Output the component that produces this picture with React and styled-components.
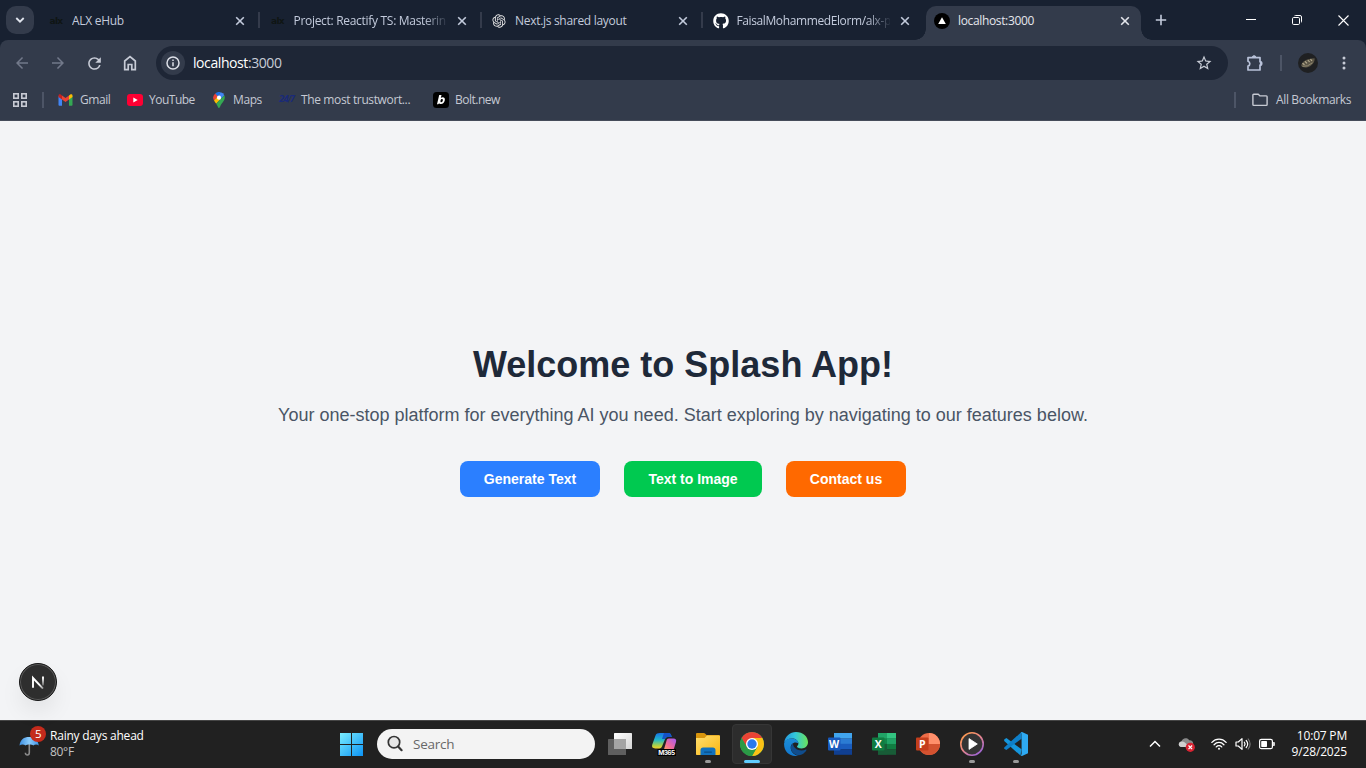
import React from "react";
import styled, { createGlobalStyle, css } from "styled-components";
import { FaGithub } from "react-icons/fa";
import { RiOpenaiFill } from "react-icons/ri";
import { MdArrowBack, MdArrowForward, MdRefresh, MdStarOutline } from "react-icons/md";

const STRIP = "#182131";
const BAR = "#333b4b";

const Global = createGlobalStyle`
  *, *::before, *::after { box-sizing: border-box; }
  html, body, #root { height: 100%; }
  body { margin: 0; overflow: hidden; font-family: "Open Sans", "Noto Sans", sans-serif; }
  svg { display: block; flex: none; }
`;

const Screen = styled.div`
  display: flex;
  flex-direction: column;
  width: 100%;
  height: 768px;
  background: ${STRIP};
`;

const Label = styled.span`
  white-space: nowrap;
  font-size: ${(p) => p.$size || 12}px;
  letter-spacing: ${(p) => p.$track || 0}px;
  line-height: 16px;
`;

/* ---------- tab strip ---------- */

const TabStrip = styled.div`
  display: flex;
  align-items: center;
  flex: none;
  height: 40px;
  padding-left: 6px;
  background: ${STRIP};
`;

const TabSearch = styled.div`
  display: grid;
  place-items: center;
  width: 28px;
  height: 28px;
  margin-right: 6px;
  border-radius: 10px;
  background: ${BAR};
`;

const flare = css`
  content: "";
  position: absolute;
  bottom: 0;
  width: 11px;
  height: 11px;
`;

const Tab = styled.div`
  position: relative;
  display: flex;
  align-items: center;
  flex: none;
  align-self: flex-end;
  width: 216px;
  height: 34px;
  margin-right: 5.5px;
  padding: 0 11px 5px 8px;
  color: #c3cbdc;
  ${(p) =>
    p.$active &&
    css`
      width: 215px;
      margin-right: 6px;
      color: #e4e6ec;
      background: ${BAR};
      border-radius: 10px 10px 0 0;
      &::before {
        ${flare}
        left: -11px;
        background: radial-gradient(circle at 0 0, transparent 10.5px, ${BAR} 11px);
      }
      &::after {
        ${flare}
        right: -11px;
        background: radial-gradient(circle at 100% 0, transparent 10.5px, ${BAR} 11px);
      }
    `}
`;

const TabIcon = styled.span`
  display: grid;
  place-items: center;
  width: 16px;
  height: 16px;
  margin-right: 8px;
`;

const TabTitle = styled(Label)`
  width: 153px;
  margin-right: auto;
  overflow: hidden;
  ${(p) => p.$fade && css`mask-image: linear-gradient(90deg, #000 130px, transparent 155px);`}
`;

const TabDivider = styled.span`
  position: absolute;
  top: 6px;
  right: -4px;
  width: 2px;
  height: 16px;
  background: #343b4b;
`;

const AlxMark = styled.span`
  font: 700 9px/12px "DejaVu Sans", sans-serif;
  letter-spacing: -0.7px;
  color: #0f1514;
`;

const WindowButtons = styled.div`
  display: flex;
  margin-left: auto;
`;

const WindowButton = styled.div`
  display: grid;
  place-items: center;
  width: 46px;
  height: 40px;
`;

const NewTab = styled.div`
  display: grid;
  place-items: center;
  width: 28px;
  height: 28px;
`;

/* ---------- toolbar ---------- */

const Toolbar = styled.div`
  display: flex;
  align-items: center;
  flex: none;
  height: 46px;
  padding: 0 13px 0 4px;
  background: ${BAR};
  border-radius: 8px 8px 0 0;
`;

const ToolButton = styled.div`
  display: grid;
  place-items: center;
  flex: none;
  width: ${(p) => p.$w || 36}px;
  height: 34px;
  color: ${(p) => (p.$dim ? "#72798a" : "#c7cbd6")};
`;

const Omnibox = styled.div`
  display: flex;
  align-items: center;
  flex: none;
  width: 1072px;
  height: 34px;
  margin: 0 8px;
  padding: 0 15px 0 5px;
  border-radius: 17px;
  background: #1e2636;
  color: #c8ccd6;
`;

const InfoBadge = styled.div`
  display: grid;
  place-items: center;
  width: 24px;
  height: 24px;
  margin-right: 8px;
  border-radius: 50%;
  background: ${BAR};
`;

const Url = styled(Label)`
  margin-right: auto;
  line-height: 20px;
  b { font-weight: 400; color: #fff; }
`;

const VRule = styled.span`
  flex: none;
  width: 2px;
  height: ${(p) => p.$h || 16}px;
  background: #4d5566;
`;

/* ---------- bookmarks ---------- */

const Bookmarks = styled.div`
  display: flex;
  align-items: center;
  flex: none;
  height: 35px;
  padding: 0 15px 7px 12px;
  background: ${BAR};
  border-bottom: 1px solid #454c5a;
`;

const Bookmark = styled.div`
  display: flex;
  align-items: center;
  width: ${(p) => p.$w}px;
  gap: ${(p) => p.$gap || 6}px;
  color: #c5c9d3;
`;

const DaySeven = styled.span`
  width: 16px;
  font: italic 700 8px/12px "DejaVu Sans", sans-serif;
  letter-spacing: -1.1px;
  color: #1a2a78;
`;

/* ---------- page ---------- */

const Page = styled.main`
  position: relative;
  display: flex;
  flex-direction: column;
  align-items: center;
  justify-content: center;
  flex: 1;
  min-height: 0;
  background: #f3f4f6;
  font-family: "Liberation Sans", Arial, sans-serif;
`;

const Heading = styled.h1`
  margin: 0 0 16px;
  font-size: 36px;
  line-height: 40px;
  font-weight: 700;
  color: #1e2939;
`;

const Intro = styled.p`
  margin: 0 0 32px;
  font-size: 18px;
  line-height: 28px;
  color: #4a5565;
`;

const Actions = styled.div`
  display: flex;
  gap: 24px;
`;

const Action = styled.button`
  width: ${(p) => p.$w}px;
  height: 36px;
  padding: 0;
  border: 0;
  border-radius: 8px;
  background: ${(p) => p.$bg};
  color: #fff;
  font: 700 14px/20px "Liberation Sans", Arial, sans-serif;
`;

const DevBadge = styled.div`
  position: absolute;
  left: 19px;
  bottom: 19px;
  display: grid;
  place-items: center;
  width: 38px;
  height: 38px;
  border-radius: 50%;
  border: 1px solid #171717;
  background: #2e2e2e;
  box-shadow: inset 0 0 0 1px #5a5a5a, 0 12px 24px -4px rgba(0, 0, 0, 0.1);
`;

/* ---------- taskbar ---------- */

const Taskbar = styled.footer`
  display: grid;
  grid-template-columns: 329px 1fr 226px;
  flex: none;
  height: 48px;
  padding-bottom: 2px;
  background: #212121;
  border-top: 1px solid #464646;
  color: #fff;
`;

const Weather = styled.div`
  display: flex;
  align-items: center;
  padding-left: 18px;
  gap: 4px;
`;

const Lines = styled.div`
  display: flex;
  flex-direction: column;
  align-items: ${(p) => (p.$end ? "flex-end" : "flex-start")};
  padding-top: 1px;
  ${(p) => p.$end && css`margin-left: auto;`}
  span + span { color: ${(p) => (p.$end ? "#fff" : "#c4c4c4")}; }
`;

const Apps = styled.div`
  display: flex;
  align-items: center;
`;

const AppSlot = styled.div`
  position: relative;
  display: grid;
  place-items: center;
  width: 44px;
  height: 45px;
`;

const ActiveFrame = styled.div`
  display: grid;
  place-items: center;
  width: 40px;
  height: 40px;
  border-radius: 4px;
  background: #2d2d2d;
  border: 1px solid #363636;
`;

const Running = styled.span`
  position: absolute;
  left: 50%;
  bottom: 3px;
  width: ${(p) => (p.$on ? 16 : 6)}px;
  height: 3px;
  transform: translateX(-50%);
  border-radius: 2px;
  background: ${(p) => (p.$on ? "#60cdff" : "#9a9a9a")};
`;

const SearchBox = styled.div`
  display: flex;
  align-items: center;
  width: 218px;
  height: 30px;
  margin: 0 3px 0 4px;
  padding-left: 10px;
  gap: 9px;
  border-radius: 15px;
  background: #f3f3f3;
  color: #686868;
`;

const Tray = styled.div`
  display: flex;
  align-items: center;
  padding-right: 19px;
`;

const TrayItem = styled.div`
  display: grid;
  place-items: center;
  width: ${(p) => p.$w}px;
  height: 30px;
`;

/* ---------- icons ---------- */

const Close = ({ c = "#c3cbdc" }) => (
  <svg width="10" height="10" viewBox="0 0 10 10" stroke={c} strokeWidth="1.6">
    <path d="M1.2 1.2l7.6 7.6M8.8 1.2L1.2 8.8" />
  </svg>
);

const HomeIcon = () => (
  <svg width="16" height="16" viewBox="0 0 16 16" fill="none" stroke="currentColor" strokeWidth="1.7">
    <path d="M2.700 6L8 1.700l5.300 4.300v8.700H9.800V9.500H6.200v5.200H2.700z" />
  </svg>
);

const InfoIcon = () => (
  <svg width="14" height="14" viewBox="0 0 14 14" fill="none" stroke="#dde0e8" strokeWidth="1.5">
    <circle cx="7" cy="7" r="6" />
    <path d="M7 6.3v4M7 3.5v1.4" />
  </svg>
);

const Puzzle = () => (
  <svg width="18" height="18" viewBox="0 0 18 18" fill="none" stroke="#b9c2d9" strokeWidth="1.7" strokeLinejoin="round">
    <path d="M2 3.6h12v4.1a1.7 1.7 0 0 1 0 3.4v4.9H2v-3.9a2.5 2.5 0 0 0 0-4.8z" />
    <path d="M6.400 3.2a1.700 1.500 0 0 1 3.400 0zM14.4 7.9a1.5 1.7 0 0 1 0 3.3z" fill="#b9c2d9" strokeWidth="1" />
  </svg>
);

const Avatar = () => (
  <svg width="20" height="20" viewBox="0 0 20 20">
    <circle cx="10" cy="10" r="10" fill="#1f2022" />
    <path d="M3.2 12.8C3.6 8.6 9 5.3 16.6 5.2c.6 3.400-2.600 8.400-8.200 9.200-2.400.200-4.400-.200-5.200-1.600z" fill="#5c5647" />
    <path d="M4.500 10.200l2 1.500M7 8.300l2 2M9.800 7l1.800 2M12.500 6.200l1.500 1.800" stroke="#b9af91" strokeWidth="1.100" />
    <path d="M4.500 13.300l5-.5 5-3" stroke="#979075" strokeWidth=".9" fill="none" />
  </svg>
);

const Apps4 = () => (
  <svg width="16" height="16" viewBox="0 0 16 16" fill="none" stroke="#c7cad3" strokeWidth="1.600">
    {[[1.8, 1.8], [9.8, 1.8], [1.8, 9.8], [9.8, 9.8]].map(([x, y]) => (
      <rect key={x + "-" + y} x={x} y={y} width="4.400" height="4.400" />
    ))}
  </svg>
);

const Gmail = () => (
  <svg width="15" height="12" viewBox="0 0 15 12">
    <path d="M.5 2v9c0 .5.400.8.8.8H4V4.500z" fill="#4285f4" />
    <path d="M14.500 2v9c0 .5-.400.8-.8.8H11V4.500z" fill="#34a853" />
    <path d="M4 1.500v4L7.500 8 11 5.500v-4L7.500 4z" fill="#ea4335" />
    <path d="M11 1.500v4l3.500-2.600V1.700C14.500.3 13 0 12 .7z" fill="#fbbc04" />
    <path d="M4 1.500v4L.5 2.900V1.700C.5.3 2 0 3 .7z" fill="#c5221f" />
  </svg>
);

const YouTube = () => (
  <svg width="16" height="12" viewBox="0 0 16 12">
    <rect width="16" height="12" rx="3" fill="#ff0033" />
    <path d="M6.300 3.500v5L10.700 6z" fill="#fff" />
  </svg>
);

const MapsPin = () => (
  <svg width="12" height="16" viewBox="0 0 12 16">
    <path d="M2.300 1.400A5.800 5.800 0 0 1 7.700.2L4 5.800z" fill="#1a73e8" />
    <path d="M7.700.2a5.800 5.800 0 0 1 3.600 3L6.500 8.500 4.300 5.500z" fill="#4285f4" />
    <path d="M2.300 1.400A5.700 5.700 0 0 0 1 8.500l4-4z" fill="#ea4335" />
    <path d="M1 8.500c.5 1.100 1.300 2 2.200 3.200L8 6.600 4.300 5z" fill="#fbbc04" />
    <path d="M3.200 11.700C4.600 13.500 5 16 6 16c1 0 1.200-2.500 2.800-4.400 1.700-2.200 4-4.700 2.500-8.400z" fill="#34a853" />
    <circle cx="6" cy="5.700" r="2.100" fill="#fff" />
  </svg>
);

const Bolt = () => (
  <svg width="16" height="16" viewBox="0 0 16 16">
    <rect width="16" height="16" rx="3.500" fill="#000" />
    <path d="M6.200 3h2.300l-.7 2.900c.6-.5 1.200-.7 1.900-.7 1.600 0 2.500 1.200 2.100 3.100-.400 2.200-1.900 3.800-3.800 3.800-.900 0-1.500-.300-1.900-.900l-.9 1.100H4zm1.400 5.200c-.4 1.500 0 2 .7 2 .8 0 1.300-.8 1.500-1.700.2-1-.1-1.600-.8-1.600-.6 0-1.200.5-1.400 1.300z" fill="#fff" fillRule="evenodd" />
  </svg>
);

const Folder = () => (
  <svg width="16" height="14" viewBox="0 0 16 14" fill="none" stroke="#c7cad3" strokeWidth="1.400" strokeLinejoin="round">
    <path d="M.9 2.700V11.600c0 .5.300.8.8.8h12.600c.5 0 .8-.3.8-.8V3.700c0-.5-.3-.8-.8-.8H8L6.300 1.300H1.700c-.5 0-.8.400-.8.8z" />
  </svg>
);

const NextN = () => (
  <svg width="14" height="14" viewBox="0 0 14 14" fill="none" strokeWidth="1.900">
    <defs>
      <linearGradient id="nd" x1="2" y1="1" x2="12.500" y2="13.500" gradientUnits="userSpaceOnUse">
        <stop offset=".65" stopColor="#fff" />
        <stop offset="1" stopColor="#fff" stopOpacity=".45" />
      </linearGradient>
      <linearGradient id="nv" x1="0" y1="1" x2="0" y2="11" gradientUnits="userSpaceOnUse">
        <stop offset=".2" stopColor="#fff" />
        <stop offset="1" stopColor="#fff" stopOpacity=".2" />
      </linearGradient>
    </defs>
    <path d="M2 12.800V3L12 13.600" stroke="url(#nd)" />
    <path d="M12 1.500V10.500" stroke="url(#nv)" />
  </svg>
);

const Umbrella = () => (
  <svg width="28" height="36" viewBox="0 0 28 36">
    <defs>
      <linearGradient id="um" x1="0" y1="0" x2="1" y2="0">
        <stop offset="0" stopColor="#3c8ee0" />
        <stop offset=".5" stopColor="#8acbfb" />
        <stop offset="1" stopColor="#3e94e8" />
      </linearGradient>
    </defs>
    <path d="M11.300 15v11.500c0 3.300-3.900 3.300-3.900.3" fill="none" stroke="#8b8b8b" strokeWidth="1.600" />
    <path d="M1.500 19.500C2.200 13.500 6 11 11 11S20 13.500 20.800 19.500c-1.500-1.300-4-1.300-5.500 0-1.500-1.300-6.300-1.300-7.800 0-1.400-1.200-4.300-1.200-6 0z" fill="url(#um)" />
    <circle cx="20" cy="8" r="8" fill="#c42b1c" />
    <text x="20.200" y="12" textAnchor="middle" fontSize="11.500" fill="#fff" fontFamily="Open Sans">5</text>
  </svg>
);

const Start = () => (
  <svg width="24" height="24" viewBox="0 0 24 24">
    <defs>
      <linearGradient id="st" x1="1" y1="0" x2="24" y2="24" gradientUnits="userSpaceOnUse">
        <stop stopColor="#7df0ff" />
        <stop offset="1" stopColor="#0c93f5" />
      </linearGradient>
    </defs>
    <path d="M1 1h11v11H1zM13 1h11v11H13zM1 13h11v11H1zM13 13h11v11H13z" fill="url(#st)" />
  </svg>
);

const SearchIcon = () => (
  <svg width="17" height="17" viewBox="0 0 17 17" fill="none" stroke="#343434" strokeWidth="1.700">
    <circle cx="7" cy="7.200" r="5.700" fill="#e6e6e6" />
    <path d="M11.100 11.500L14.600 15.200" strokeWidth="2.200" strokeLinecap="round" />
  </svg>
);

const TaskView = () => (
  <svg width="26" height="24" viewBox="0 0 26 24">
    <defs>
      <linearGradient id="tv" x1="0" y1="0" x2="1" y2="1">
        <stop stopColor="#fff" />
        <stop offset="1" stopColor="#d4d4d4" />
      </linearGradient>
    </defs>
    <rect x="7" y="1" width="18" height="16" rx=".6" fill="url(#tv)" />
    <rect x="1" y="7" width="18" height="16" rx=".6" fill="#5f5f5f" />
    <rect x="7" y="7" width="12" height="10" fill="#a4a4a4" />
  </svg>
);

const Copilot = () => (
  <svg width="26" height="26" viewBox="0 0 26 26">
    <defs>
      <linearGradient id="ca" x1="0" y1="0" x2="0" y2="1">
        <stop stopColor="#1673e8" />
        <stop offset=".45" stopColor="#22b8c7" />
        <stop offset=".8" stopColor="#a8d14a" />
        <stop offset="1" stopColor="#f3cf27" />
      </linearGradient>
      <linearGradient id="cb" x1="1" y1="0" x2="0" y2="1">
        <stop stopColor="#a45bf2" />
        <stop offset=".6" stopColor="#f06a9a" />
        <stop offset="1" stopColor="#ffa25c" />
      </linearGradient>
    </defs>
    <path d="M9 2h8.500c2 0 2.500 1.400 3.200 4h-4c-1.700 0-2.300 1-2.800 2.500L11.200 15c-.5 1.600-1.300 2.400-3 2.400H4.200C1.500 17.400.6 16 1.200 13.800L4.500 4.500C5.200 2.700 6.500 2 9 2z" fill="url(#ca)" />
    <path d="M13 2h4.500c2 0 2.500 1.400 3.200 4h-4c-1.500 0-2.300.7-2.800 2H11z" fill="#1551c7" />
    <path d="M17.800 7.500h4.700c2.300 0 3.100 1.300 2.500 3.600L22.500 19H12.800l2.700-9.200c.4-1.500 1-2.300 2.300-2.300z" fill="url(#cb)" />
    <rect x="6.500" y="18" width="18.500" height="7" fill="#000" />
    <text x="15.700" y="24" textAnchor="middle" fontSize="6.500" fontWeight="700" fill="#fff" fontFamily="Inter" textLength="17">M365</text>
  </svg>
);

const Explorer = () => (
  <svg width="26" height="24" viewBox="0 0 26 24">
    <defs>
      <linearGradient id="ex" x1="0" y1="0" x2="1" y2="1">
        <stop stopColor="#ffdf70" />
        <stop offset="1" stopColor="#fcb60f" />
      </linearGradient>
    </defs>
    <path d="M1 2.200C1 1.400 1.500 1 2.200 1h6.400c.8 0 1.200.2 1.700.8L11.500 3h12c.9 0 1.500.6 1.500 1.400V7H1z" fill="#d9950c" />
    <path d="M1 6h8.500L12 3.500h12c.6 0 1 .4 1 1V22c0 .6-.4 1-1 1H2c-.6 0-1-.4-1-1z" fill="url(#ex)" />
    <path d="M5.500 23v-5c0-1.600 1-2.500 2.500-2.500h10c1.500 0 2.500.9 2.500 2.500v5z" fill="#1272bd" />
    <rect x="9" y="19.500" width="8" height="1.200" rx=".6" fill="#0b4d85" />
  </svg>
);

const Chrome = () => (
  <svg width="24" height="24" viewBox="0 0 24 24">
    <circle cx="12" cy="12" r="12" fill="#34a853" />
    <path d="M1.610 6A12 12 0 0 1 22.390 6L12 6.300 6.800 15z" fill="#ea4335" />
    <path d="M22.390 6A12 12 0 0 1 12 24L17.200 15 12 6z" fill="#fbc116" />
    <path d="M1.610 6L6.800 15 12 17.500 17.200 15 12 24A12 12 0 0 1 1.610 6z" fill="#2b9a46" />
    <circle cx="12" cy="12" r="6" fill="#fff" />
    <circle cx="12" cy="12" r="4.700" fill="#2a79ed" />
  </svg>
);

const Edge = () => (
  <svg width="24" height="24" viewBox="0 0 24 24">
    <defs>
      <linearGradient id="ea" x1="0" y1=".4" x2="1" y2=".4">
        <stop stopColor="#2697df" />
        <stop offset=".45" stopColor="#31c7dc" />
        <stop offset="1" stopColor="#6be35a" />
      </linearGradient>
      <linearGradient id="eb" x1="0" y1="0" x2="0" y2="1">
        <stop stopColor="#1c8ed8" />
        <stop offset="1" stopColor="#1177cf" />
      </linearGradient>
    </defs>
    <path d="M.2 10.500C1 4.200 6 0 12 0c7 0 12 4.700 12 10.300 0 3.800-2.900 6.100-6.300 6.100-3 0-4.700-1-4.700-1.900 0-.7 1.400-1.200 1.400-3.100C14.400 8.500 11.500 6.400 8 6.400c-3.500 0-6.500 1.800-7.800 4.100z" fill="url(#ea)" />
    <path d="M.1 11.500C.7 8.300 3.600 6.400 7.600 6.400c3.700 0 6.600 2 6.800 4.800-5-2-8.200 1.500-7.600 5.500.6 4 3.900 6.400 7.500 6.900C6.500 25.500-.4 20 .1 11.500z" fill="url(#eb)" />
    <path d="M8.900 11.500c-2.600 2.200-2.600 5.800-.5 8.600 2.300 3 6.300 4 9.400 2.400 2-1 3.800-2.700 4.600-4.300.3-.6-.1-.8-.6-.6-5.700 2.400-12.400-.300-12.900-6.100z" fill="#104d8d" />
  </svg>
);

const OfficeTile = ({ letter, colors, badge }) => (
  <svg width="26" height="24" viewBox="0 0 26 24">
    {colors.map((c, i) => <rect key={c} x="7" y={1 + i * 5.4} width="18" height="5.600" fill={c} />)}
    {letter === "X" && (
      <>
        <rect x="7" y="1" width="9" height="5.400" fill="#21a366" />
        <rect x="7" y="6.400" width="9" height="5.400" fill="#12874a" />
        <rect x="16" y="6.400" width="9" height="5.400" fill="#21a366" />
        <rect x="7" y="11.800" width="9" height="10.800" fill="#185c37" />
      </>
    )}
    {letter === "P" && (
      <>
        <circle cx="14" cy="12" r="11" fill="#ed6c47" />
        <path d="M14 1a11 11 0 0 1 11 11H14z" fill="#ff8f6b" />
        <path d="M3 12h22a11 11 0 0 1-22 0z" fill="#d35230" />
      </>
    )}
    <rect x="1" y="5.500" width="12.500" height="13" rx="1" fill={badge} />
    <text x="7.200" y="15.600" textAnchor="middle" fontSize="10.500" fontWeight="700" fill="#fff" fontFamily="Open Sans">
      {letter}
    </text>
  </svg>
);

const MediaPlayer = () => (
  <svg width="24" height="24" viewBox="0 0 24 24">
    <defs>
      <linearGradient id="mp" x1="0" y1="0" x2=".8" y2="1">
        <stop stopColor="#ff9d3f" />
        <stop offset=".5" stopColor="#e98686" />
        <stop offset="1" stopColor="#9a63d8" />
      </linearGradient>
    </defs>
    <circle cx="12" cy="12" r="11.200" fill="#343434" stroke="url(#mp)" strokeWidth="1.600" />
    <path d="M9 6.600v10.800l8.300-5.400z" fill="#fff" stroke="#fff" strokeWidth=".8" strokeLinejoin="round" />
  </svg>
);

const VSCode = () => (
  <svg width="24" height="24" viewBox="0 0 24 24">
    <path d="M2.400 6L.2 7.400v1.700L16.500 23.600l1-6.300z" fill="#1596dd" />
    <path d="M17.500 0L.2 15.400v1.300L2.400 18 17.500 6.700z" fill="#0e7fc9" />
    <path d="M16.800.5L18 0l6 2.800v18.400L18 24l-1.400-.5 1-1.300V1.800z" fill="#2eaaf3" />
  </svg>
);

const Cloud = () => (
  <svg width="18" height="16" viewBox="0 0 18 16">
    <path d="M3.800 11C1.500 11 .6 9.500.8 8c.2-1.500 1.400-2.300 2.600-2.400C4 3 6.300 1.800 8.500 2.300c1.200.2 2 .9 2.700 1.900 2.500-.2 4 1.400 4 3.300C15.200 9.800 13.700 11 12 11z" fill="#8a8a8a" />
    <path d="M3.800 11C1.500 11 .6 9.500.8 8c.2-1.500 1.400-2.300 2.600-2.400 1.800-.4 3 .5 4.600 1.900l3 3.500z" fill="#d0d0d0" />
    <circle cx="12.300" cy="11.300" r="4.600" fill="#d92332" />
    <path d="M10.500 9.500l3.600 3.600M14.100 9.500l-3.600 3.600" stroke="#fff" strokeWidth="1.200" />
  </svg>
);

const Wifi = () => (
  <svg width="16" height="14" viewBox="0 0 16 14" fill="none" stroke="#fff" strokeWidth="1.300" strokeLinecap="round">
    <path d="M.9 5.400c4-4.300 10.200-4.300 14.200 0M3.100 7.700c2.800-3 7-3 9.800 0M5.300 9.900c1.500-1.700 3.900-1.700 5.400 0" />
    <circle cx="8" cy="11.700" r="1" fill="#fff" stroke="none" />
  </svg>
);

const Sound = () => (
  <svg width="16" height="14" viewBox="0 0 16 14" fill="none" stroke="#fff" strokeWidth="1.200" strokeLinecap="round" strokeLinejoin="round">
    <path d="M1 5h2.300L7 1.600v10.800L3.300 9H1z" />
    <path d="M9.300 5.200c.9 1.100.9 2.500 0 3.600M11.200 3.500c1.700 2 1.700 5 0 7" />
    <path d="M13.200 2c2.300 3 2.300 7 0 10" stroke="#777" />
  </svg>
);

const Battery = () => (
  <svg width="16" height="12" viewBox="0 0 16 12">
    <rect x=".6" y="1.300" width="12.800" height="9.400" rx="1.800" fill="none" stroke="#fff" strokeWidth="1.200" />
    <path d="M14.200 4h.8c.5 0 .8.300.8.700v2.600c0 .4-.3.700-.8.700h-.8z" fill="#fff" />
    <rect x="2.200" y="3" width="5.800" height="6" rx=".7" fill="#fff" />
  </svg>
);

const TABS = [
  { title: "ALX eHub", icon: <AlxMark>alx</AlxMark>, track: -0.3, divider: true },
  { title: "Project: Reactify TS: Masterin", icon: <AlxMark>alx</AlxMark>, fade: true, track: -0.3, divider: true },
  { title: "Next.js shared layout", icon: <RiOpenaiFill size={16} color="#e6e6e6" />, track: -0.3, divider: true },
  { title: "FaisalMohammedElorm/alx-p", icon: <FaGithub size={16} color="#fff" />, fade: true, track: -0.39 },
  {
    title: "localhost:3000",
    active: true,
    track: -0.35,
    icon: (
      <svg width="16" height="16" viewBox="0 0 16 16">
        <circle cx="8" cy="8" r="8" fill="#000" />
        <path d="M8 4.300l3.800 6.600H4.200z" fill="#fff" />
      </svg>
    ),
  },
];

const TASKS = [
  { id: "view", icon: <TaskView /> },
  { id: "copilot", icon: <Copilot /> },
  { id: "files", icon: <Explorer />, running: true },
  { id: "chrome", icon: <Chrome />, running: true, on: true },
  { id: "edge", icon: <Edge /> },
  { id: "word", icon: <OfficeTile letter="W" badge="#185abd" colors={["#41a5ee", "#2b7cd3", "#1a5dbe", "#103f91"]} /> },
  { id: "excel", icon: <OfficeTile letter="X" badge="#107c41" colors={["#33c481", "#21a366", "#107c41", "#185c37"]} /> },
  { id: "ppt", icon: <OfficeTile letter="P" badge="#c43e1c" colors={[]} /> },
  { id: "media", icon: <MediaPlayer />, running: true },
  { id: "code", icon: <VSCode />, running: true },
];

export default function App() {
  return (
    <Screen>
      <Global />
      <TabStrip>
        <TabSearch>
          <svg width="10" height="8" viewBox="0 0 10 8" fill="none" stroke="#e1e5ee" strokeWidth="1.800">
            <path d="M1.300 2L5 5.700 8.700 2" />
          </svg>
        </TabSearch>
        {TABS.map((t) => (
          <Tab key={t.title} $active={t.active}>
            <TabIcon>{t.icon}</TabIcon>
            <TabTitle $track={t.track} $fade={t.fade}>{t.title}</TabTitle>
            <Close c={t.active ? "#e4e6ec" : undefined} />
            {t.divider && <TabDivider />}
          </Tab>
        ))}
        <NewTab>
          <svg width="12" height="12" viewBox="0 0 12 12" stroke="#c3cbdc" strokeWidth="1.600">
            <path d="M6 .8v10.400M.8 6h10.400" />
          </svg>
        </NewTab>
        <WindowButtons>
          <WindowButton>
            <svg width="10" height="10" viewBox="0 0 10 10" stroke="#fff"><path d="M0 4.500h10" /></svg>
          </WindowButton>
          <WindowButton>
            <svg width="10" height="10" viewBox="0 0 10 10" fill="none" stroke="#fff">
              <rect x=".5" y="2.500" width="7" height="7" rx="1.200" />
              <path d="M2.500.8C2.700.5 3 .5 3.500.5H8A1.500 1.500 0 0 1 9.500 2v4.500c0 .5 0 .8-.5 1" />
            </svg>
          </WindowButton>
          <WindowButton>
            <svg width="11" height="11" viewBox="0 0 11 11" stroke="#fff" strokeWidth="1.100">
              <path d="M.5.500l10 10M10.500.500l-10 10" />
            </svg>
          </WindowButton>
        </WindowButtons>
      </TabStrip>

      <Toolbar>
        <ToolButton $dim><MdArrowBack size={18} /></ToolButton>
        <ToolButton $dim><MdArrowForward size={18} /></ToolButton>
        <ToolButton><MdRefresh size={19} /></ToolButton>
        <ToolButton><HomeIcon /></ToolButton>
        <Omnibox>
          <InfoBadge><InfoIcon /></InfoBadge>
          <Url $size={14} $track={-0.42}><b>localhost</b>:3000</Url>
          <MdStarOutline size={18} />
        </Omnibox>
        <ToolButton $w={38}><Puzzle /></ToolButton>
        <ToolButton $w={14}><VRule /></ToolButton>
        <ToolButton $w={40}><Avatar /></ToolButton>
        <ToolButton $w={32}>
          <svg width="4" height="16" viewBox="0 0 4 16" fill="#c7cbd6">
            <circle cx="2" cy="3" r="1.500" /><circle cx="2" cy="8" r="1.500" /><circle cx="2" cy="13" r="1.500" />
          </svg>
        </ToolButton>
      </Toolbar>

      <Bookmarks>
        <Bookmark $w={30}><Apps4 /></Bookmark>
        <Bookmark $w={16}><VRule /></Bookmark>
        <Bookmark $w={69} $gap={7}><Gmail /><Label $track={-0.45}>Gmail</Label></Bookmark>
        <Bookmark $w={86}><YouTube /><Label $track={-0.5}>YouTube</Label></Bookmark>
        <Bookmark $w={66} $gap={8}><MapsPin /><Label $track={-0.4}>Maps</Label></Bookmark>
        <Bookmark $w={154}><DaySeven>24/7</DaySeven><Label $track={-0.37}>The most trustwort...</Label></Bookmark>
        <Bookmark $w={100}><Bolt /><Label $track={-0.5}>Bolt.new</Label></Bookmark>
        <Bookmark $w={18} style={{ marginLeft: "auto" }}><VRule /></Bookmark>
        <Bookmark $w={99} $gap={8}><Folder /><Label $track={-0.37}>All Bookmarks</Label></Bookmark>
      </Bookmarks>

      <Page>
        <Heading>Welcome to Splash App!</Heading>
        <Intro>Your one-stop platform for everything AI you need. Start exploring by navigating to our features below.</Intro>
        <Actions>
          <Action $w={140} $bg="#2b7fff">Generate Text</Action>
          <Action $w={138} $bg="#00c950">Text to Image</Action>
          <Action $w={120} $bg="#ff6900">Contact us</Action>
        </Actions>
        <DevBadge><NextN /></DevBadge>
      </Page>

      <Taskbar>
        <Weather>
          <Umbrella />
          <Lines>
            <Label $track={-0.22}>Rainy days ahead</Label>
            <Label $track={-0.3}>80°F</Label>
          </Lines>
        </Weather>
        <Apps>
          <AppSlot><Start /></AppSlot>
          <SearchBox><SearchIcon /><Label $size={13.5} $track={-0.25}>Search</Label></SearchBox>
          {TASKS.map((t) => (
            <AppSlot key={t.id}>
              {t.on ? <ActiveFrame>{t.icon}</ActiveFrame> : t.icon}
              {t.running && <Running $on={t.on} />}
            </AppSlot>
          ))}
        </Apps>
        <Tray>
          <TrayItem $w={30}>
            <svg width="12" height="8" viewBox="0 0 12 8" fill="none" stroke="#fff" strokeWidth="1.500"><path d="M1 6.500l5-5 5 5" /></svg>
          </TrayItem>
          <TrayItem $w={34}><Cloud /></TrayItem>
          <TrayItem $w={30}><Wifi /></TrayItem>
          <TrayItem $w={18}><Sound /></TrayItem>
          <TrayItem $w={30}><Battery /></TrayItem>
          <Lines $end>
            <Label $track={-0.2}>10:07 PM</Label>
            <Label $track={-0.15}>9/28/2025</Label>
          </Lines>
        </Tray>
      </Taskbar>
    </Screen>
  );
}
